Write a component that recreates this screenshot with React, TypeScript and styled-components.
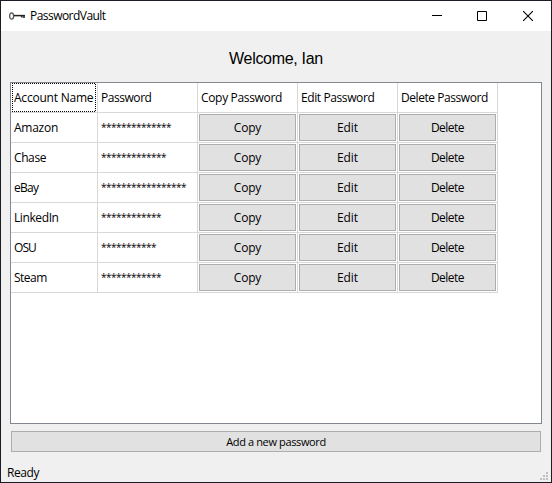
import React from "react";
import styled, { createGlobalStyle } from "styled-components";

const GlobalStyle = createGlobalStyle`
  * { box-sizing: border-box; }
  html, body { margin: 0; padding: 0; overflow: hidden; }
`;

const Window = styled.div`
  width: 552px;
  height: 483px;
  display: flex;
  flex-direction: column;
  background: #f0f0f0;
  border: 1px solid #1b1c26;
  color: #000;
  font: 12px/16px "Open Sans", "Noto Sans", sans-serif;
  white-space: nowrap;
`;

const TitleBar = styled.header`
  flex: 0 0 30px;
  display: flex;
  align-items: center;
  background: #fff;
  padding-left: 8px;
`;

const Label = styled.span<{ $track?: number }>`
  display: block;
  letter-spacing: ${(p) => p.$track ?? 0}px;
`;

const AppTitle = styled(Label)`
  margin-left: 4px;
  flex: 1;
`;

const Caption = styled.div`
  width: 46px;
  height: 30px;
  display: flex;
  align-items: center;
  justify-content: center;
`;

const Heading = styled.h1`
  margin: 0;
  flex: 0 0 51px;
  padding-top: 18px;
  text-align: center;
  font: 16px/20px "Liberation Sans", Arial, sans-serif;
  letter-spacing: -0.3px;
`;

const TableFrame = styled.main`
  flex: 0 0 342px;
  margin: 0 9px;
  border: 1px solid #828790;
  background: #fff;
`;

const Row = styled.div`
  display: grid;
  grid-template-columns: 87px repeat(4, 100px);
  height: 30px;
`;

const Cell = styled.div`
  display: flex;
  align-items: center;
  border-right: 1px solid #d8d8d8;
  border-bottom: 1px solid #d8d8d8;
  padding: 1px 0 0 3px;
`;

const FocusCell = styled(Cell)`
  padding: 0 1px;
`;

const FocusRing = styled.div`
  display: flex;
  align-items: center;
  width: 84px;
  height: 29px;
  padding: 1px 0 0 2px;
  background:
    repeating-linear-gradient(90deg, #000 0 1px, #fff 1px 2px) top / 100% 1px no-repeat,
    repeating-linear-gradient(90deg, #000 0 1px, #fff 1px 2px) bottom / 100% 1px no-repeat,
    repeating-linear-gradient(180deg, #000 0 1px, #fff 1px 2px) left / 1px 100% no-repeat,
    repeating-linear-gradient(180deg, #fff 0 1px, #000 1px 2px) right / 1px 100% no-repeat;
`;

const ButtonCell = styled(Cell)`
  padding: 1px;
`;

const Mask = styled.span`
  padding-bottom: 2px;
  font-family: "Open Sans", sans-serif;
  font-size: 10px;
  letter-spacing: -0.51px;
`;

const Button = styled.button`
  display: flex;
  align-items: center;
  justify-content: center;
  width: 100%;
  height: 27px;
  margin: 0;
  padding: 1px 0 0;
  border: 1px solid #adadad;
  background: #e1e1e1;
  color: #000;
  font: inherit;
`;

const AddButton = styled(Button)`
  width: auto;
  height: 21px;
  margin: 7px 10px 0;
  font-size: 11px;
`;

const StatusBar = styled.footer`
  flex: 1;
  display: flex;
  justify-content: space-between;
  align-items: flex-end;
  padding: 0 3px 1px 6px;
`;

const KeyIcon = () => (
  <svg width="17" height="10" viewBox="0 0 17 10" fill="none">
    <ellipse cx="2.6" cy="5" rx="2" ry="3.2" stroke="#555" strokeWidth="1.3" />
    <path d="M5 4.6H16" stroke="#222" strokeWidth="1.5" />
    <path d="M12.8 5V6.5M15 5V7" stroke="#333" strokeWidth="1.7" />
  </svg>
);

const Grip = styled.svg`
  display: block;
  margin-bottom: 1px;
`;

const SizeGrip = () => (
  <Grip width="8" height="8" fill="#bfbfbf" shapeRendering="crispEdges">
    <path d="M6 0h2v2h-2zM3 3h2v2h-2zM6 3h2v2h-2zM0 6h2v2h-2zM3 6h2v2h-2zM6 6h2v2h-2z" />
  </Grip>
);

const headers: [string, number][] = [
  ["Password", -0.45],
  ["Copy Password", -0.33],
  ["Edit Password", -0.4],
  ["Delete Password", -0.44],
];

const accounts: [string, number, number][] = [
  ["Amazon", 14, -0.25],
  ["Chase", 13, -0.4],
  ["eBay", 17, -0.7],
  ["LinkedIn", 12, -0.4],
  ["OSU", 11, -0.9],
  ["Steam", 12, -0.5],
];

const actions: [string, number][] = [["Copy", -0.2], ["Edit", -0.1], ["Delete", -0.5]];

export default function App() {
  return (
    <>
      <GlobalStyle />
      <Window>
        <TitleBar>
          <KeyIcon />
          <AppTitle $track={-0.54}>PasswordVault</AppTitle>
          <Caption>
            <svg width="12" height="10" shapeRendering="crispEdges"><path d="M2 4h10v1H2z" /></svg>
          </Caption>
          <Caption>
            <svg width="10" height="10" fill="none" stroke="#000"><path d="M.5.5h9v9h-9z" /></svg>
          </Caption>
          <Caption>
            <svg width="10" height="10" fill="none" stroke="#000" strokeWidth="1.1"><path d="M0 0l10 10M10 0L0 10" /></svg>
          </Caption>
        </TitleBar>
        <Heading>Welcome, Ian</Heading>
        <TableFrame>
          <Row>
            <FocusCell>
              <FocusRing><Label $track={-0.22}>Account Name</Label></FocusRing>
            </FocusCell>
            {headers.map(([text, track]) => (
              <Cell key={text}><Label $track={track}>{text}</Label></Cell>
            ))}
          </Row>
          {accounts.map(([name, length, track]) => (
            <Row key={name}>
              <Cell><Label $track={track}>{name}</Label></Cell>
              <Cell><Mask>{"*".repeat(length)}</Mask></Cell>
              {actions.map(([text, spacing]) => (
                <ButtonCell key={text}>
                  <Button><Label $track={spacing}>{text}</Label></Button>
                </ButtonCell>
              ))}
            </Row>
          ))}
        </TableFrame>
        <AddButton><Label $track={-0.37}>Add a new password</Label></AddButton>
        <StatusBar>
          <Label $track={-0.4}>Ready</Label>
          <SizeGrip />
        </StatusBar>
      </Window>
    </>
  );
}
